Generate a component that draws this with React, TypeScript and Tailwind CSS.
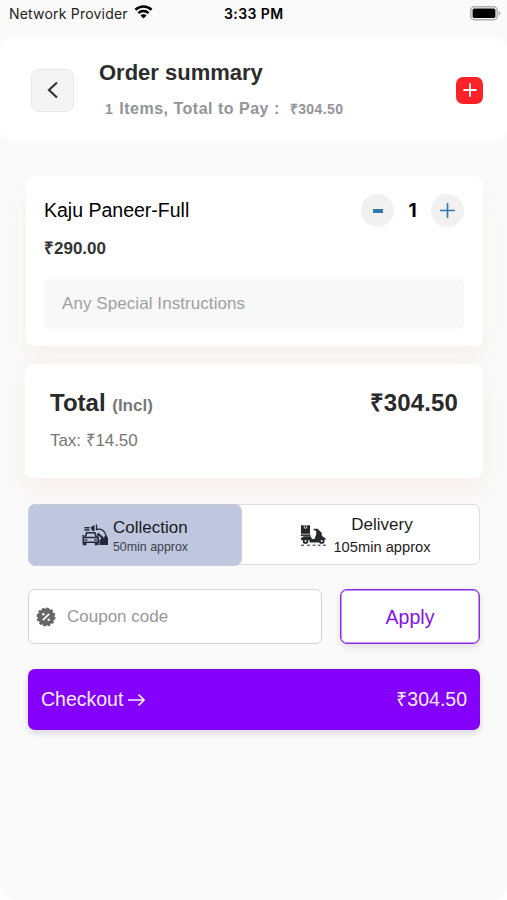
import { useState } from "react";

const RUPEE = "₹";

function WifiIcon() {
  return (
    <svg width="19" height="14" viewBox="0 0 20 15" fill="none" stroke="#000" strokeWidth="2.7">
      <path d="M1.4 5.1a12.3 12.3 0 0 1 17.2 0" />
      <path d="M4.6 8.7a7.8 7.8 0 0 1 10.8 0" />
      <path d="M10 14.4 6.7 11.3a4.7 4.7 0 0 1 6.6 0Z" fill="#000" stroke="none" />
    </svg>
  );
}

function BatteryIcon() {
  return (
    <svg width="32" height="15" viewBox="0 0 32 15">
      <rect x="0.8" y="0.8" width="26.4" height="13" rx="3.6" fill="#fafafa" stroke="#b0b0b0" strokeWidth="1.5" />
      <rect x="2.6" y="2.6" width="22.8" height="9.4" rx="1.6" fill="#000" />
      <path d="M28.6 5v4.6c1.1-.4 1.8-1.2 1.8-2.3S29.7 5.4 28.6 5Z" fill="#aaa" />
    </svg>
  );
}

function CollectionIcon() {
  return (
    <svg width="26" height="22" viewBox="0 0 26 22" fill="none" stroke="#23283a" strokeWidth="1.6">
      {/* car */}
      <path d="M3 13.5 4.7 8.8h8.1l1.7 4.7" />
      <path d="M1.3 13.5h14.9v4.7H1.3Z" />
      <path d="M.8 18.5h3.7v2.7H.8ZM12.8 18.5h3.7v2.7h-3.7Z" fill="#23283a" stroke="none" />
      <path d="M2.5 15.8h3M12 15.8h3" strokeWidth="1.2" />
      <path d="M0 11.8h2.3M15 11.8h2.3" strokeWidth="1.3" />
      {/* parcel and hand */}
      <path d="M2.5 3h5v1.5h-5ZM2.500 5.3h5v1.4h-5Z" fill="#23283a" stroke="none" />
      <path d="M8.5 3.2 12.5 1v6.3L10 6.5Z" fill="#23283a" stroke="none" />
      <path d="M14.5.5v5c3.3-.8 6.5.3 8.5 3.5 1.3 2.3 1.9 4.5 2 7.5" strokeWidth="1.3" />
      <path d="m15.5 9.5 5.5 4.5" strokeWidth="2.2" />
      <path d="m17.3 21 .2-4.8 2.5-2.7 2 .2 1-2.500 3 2.300V21h-8.700Z" fill="#23283a" stroke="none" />
    </svg>
  );
}

function DeliveryIcon() {
  return (
    <svg width="26" height="21" viewBox="0 0 26 21" fill="none" stroke="#26282c">
      {/* box */}
      <path d="M1 .3h9v8.5H1Z" fill="#26282c" stroke="none" />
      <path d="M4.3.3v2.8h2.3V.3" stroke="#fff" strokeWidth=".7" />
      <path d="M.8 10.2h9.7" strokeWidth="1.5" />
      {/* scooter */}
      <path d="M.7 15c.3-2.5 2-3.7 4-3.7h6.1l1.2 2.7h2.500l1.700-4.500V5.600h-2.500V3.800h4.100l1.200 1.500 2.700 2.500v2.500l1.300 1.700c1.500.3 2.700 1.400 2.900 2.800h-5.400l-2 2.700H9.800l-.6-2.500Z" fill="#26282c" stroke="none" />
      <circle cx="5.500" cy="16" r="1.900" fill="#fff" strokeWidth="1.900" />
      <circle cx="21.700" cy="16" r="1.900" fill="#fff" strokeWidth="1.900" />
      <path d="M1 20.200h3M7 20.200h3M12.500 20.200h3M18 20.200h2.500M23 20.200h3" strokeWidth="1" />
    </svg>
  );
}

function CouponIcon() {
  return (
    <svg width="20" height="20" viewBox="0 0 20 20" fill="none">
      <circle cx="10" cy="10" r="8.4" fill="#666" />
      <circle cx="10" cy="10" r="8.5" stroke="#666" strokeWidth="2" strokeDasharray="2.700 1.750" />
      <path d="m6.8 13.2 6.4-6.4" stroke="#fff" strokeWidth="1.8" />
      <circle cx="7.3" cy="7.3" r="1.2" fill="#fff" />
      <circle cx="12.7" cy="12.7" r="1.2" fill="#fff" />
    </svg>
  );
}

function StatusBar() {
  return (
    <div className="flex h-[37px] items-start pt-[5px] font-['Inter',sans-serif] text-[14px] leading-[18px] text-black">
      <div className="flex w-[224px] items-start gap-[6px] pl-[9px]">
        <span className="tracking-[0.2px] whitespace-nowrap text-[#222]">Network Provider</span>
        <WifiIcon />
      </div>
      <span className="font-semibold tracking-[0.4px] whitespace-nowrap">3:33 PM</span>
      <div className="flex flex-1 justify-end pt-[1px] pr-[5px]">
        <BatteryIcon />
      </div>
    </div>
  );
}

function Header() {
  return (
    <header className="flex h-[104px] items-center rounded-[14px] bg-white pt-[2px] pr-[24px] pl-[31px]">
      <button className="flex h-[43px] w-[43px] items-center justify-center rounded-[8px] border border-[#e8e8e8] bg-[#f4f4f4]">
        <svg width="11" height="18" viewBox="0 0 11 18" fill="none" stroke="#333" strokeWidth="2.2">
          <path d="m10 1.500-8 7.500 8 7.500" />
        </svg>
      </button>
      <div className="-mt-[2px] ml-[25px] flex-1 whitespace-nowrap">
        <h1 className="text-[22px] leading-[26px] font-bold text-[#2c2c2c]">Order summary</h1>
        <p className="mt-[13px] flex items-baseline pl-[6px] text-[16px] leading-[20px] font-bold tracking-[0.5px] text-[#929499]">
          <span className="mr-[6px] text-[14px]">1</span>
          <span>Items, Total to Pay :</span>
          <span className="ml-[10px] text-[14px] tracking-[0.4px]">{RUPEE}304.50</span>
        </p>
      </div>
      <button className="flex h-[27px] w-[27px] items-center justify-center rounded-[7px] bg-[#fd2227]">
        <svg width="14" height="14" viewBox="0 0 14 14" stroke="#fff" strokeWidth="1.8" strokeLinecap="round">
          <path d="M7 1v12M1 7h12" />
        </svg>
      </button>
    </header>
  );
}

function ItemCard() {
  const [qty, setQty] = useState(1);

  return (
    <section className="mt-[35px] mr-[24px] ml-[26px] h-[170px] rounded-[8px] bg-white pt-[17px] pr-[19px] pl-[18px] shadow-[0_14px_26px_rgba(200,90,70,0.055)]">
      <div className="flex items-center">
        <span className="flex-1 pt-px text-[19.5px] leading-[33px] text-black">Kaju Paneer-Full</span>
        <button
          className="flex h-[33px] w-[33px] items-center justify-center rounded-full bg-[#f1f1f1]"
          onClick={() => setQty(Math.max(1, qty - 1))}
        >
          <span className="mt-[2px] h-[4px] w-[10px] bg-[#3379ae]" />
        </button>
        <span className="w-[37px] text-center font-['Inter',sans-serif] text-[19px] leading-[33px] font-bold text-black">
          {qty}
        </span>
        <button
          className="flex h-[33px] w-[33px] items-center justify-center rounded-full bg-[#f1f1f1]"
          onClick={() => setQty(qty + 1)}
        >
          <svg className="mt-px" width="15" height="15" viewBox="0 0 15 15" stroke="#3379ae" strokeWidth="1.7">
            <path d="M7.5 0v15M0 7.5h15" />
          </svg>
        </button>
      </div>
      <p className="mt-[12px] text-[17px] leading-[20px] font-bold text-[#333]">{RUPEE}290.00</p>
      <input
        className="mt-[20px] block h-[50px] w-full rounded-[5px] bg-[#f8f8f8] px-[18px] text-[17px] tracking-[0.07px] outline-none placeholder:text-[#a0a0a0]"
        placeholder="Any Special Instructions"
      />
    </section>
  );
}

function TotalCard() {
  return (
    <section className="mt-[18px] mr-[24px] ml-[25px] h-[114px] rounded-[8px] bg-white pt-[24px] pr-[25px] pl-[25px] shadow-[0_12px_26px_rgba(200,90,70,0.065)]">
      <div className="flex items-baseline justify-between text-[24px] leading-[30px] font-bold text-[#2a2a2a]">
        <span>
          Total <span className="text-[17px] text-[#777]">(Incl)</span>
        </span>
        <span className="tracking-[0.15px]">{RUPEE}304.50</span>
      </div>
      <p className="mt-[10px] text-[17px] leading-[20px] tracking-[-0.08px] text-[#777]">Tax: {RUPEE}14.50</p>
    </section>
  );
}

function FulfilmentToggle() {
  return (
    <div className="mt-[26px] mr-[27px] ml-[28px] flex h-[61px] rounded-[7px] border border-[#dcdcde] bg-white">
      <button className="-mt-px -ml-px flex h-[62px] w-[214px] items-center justify-center gap-[5px] rounded-[7px] border border-[#c9cde0] bg-[#bfc6de] text-[#171a22]">
        <CollectionIcon />
        <span className="flex flex-col items-start pt-[4px]">
          <span className="text-[17px] leading-[20px]">Collection</span>
          <span className="text-[12.4px] leading-[19px] text-[#3b3f4d]">50min approx</span>
        </span>
      </button>
      <button className="flex flex-1 items-center justify-center gap-[7px] pt-px pl-[10px] text-[#1c1c1c]">
        <DeliveryIcon />
        <span className="flex flex-col items-center pt-px">
          <span className="text-[17px] leading-[22px]">Delivery</span>
          <span className="text-[14.7px] leading-[22px]">105min approx</span>
        </span>
      </button>
    </div>
  );
}

function CouponRow() {
  return (
    <div className="mt-[24px] mr-[27px] ml-[28px] flex h-[55px] gap-[18px]">
      <label className="flex w-[294px] items-center rounded-[6px] border border-[#d4d4d4] bg-white pl-[7px]">
        <CouponIcon />
        <input
          className="ml-[11px] min-w-0 flex-1 pt-px text-[17px] outline-none placeholder:text-[#999]"
          placeholder="Coupon code"
        />
      </label>
      <button className="flex-1 rounded-[7px] border border-[#8b2be8] bg-white pt-[3px] text-[19.5px] text-[#8412ea] shadow-[inset_0_0_0_0.5px_#8b2be8,0_3px_6px_rgba(60,60,80,0.14)]">
        Apply
      </button>
    </div>
  );
}

export default function App() {
  return (
    <div className="h-[900px] w-[507px] overflow-hidden bg-white">
      <div className="h-full rounded-b-[14px] bg-[#fafafa] font-['Liberation_Sans',Arial,sans-serif]">
        <StatusBar />
        <Header />
        <ItemCard />
        <TotalCard />
        <FulfilmentToggle />
        <CouponRow />
        <button className="mt-[25px] ml-[28px] flex h-[61px] w-[452px] items-center justify-between rounded-[7px] bg-[#8500fa] pt-px pr-[13px] pl-[13px] text-[19.5px] text-[#f8edff] shadow-[0_3px_6px_rgba(60,60,110,0.18)]">
          <span className="flex items-center gap-[5px]">
            Checkout
            <svg width="17" height="14" viewBox="0 0 17 14" fill="none" stroke="#f8edff" strokeWidth="1.7">
              <path d="M0 7h16M10.5 1.500 16 7l-5.500 5.500" />
            </svg>
          </span>
          <span>{RUPEE}304.50</span>
        </button>
      </div>
    </div>
  );
}
